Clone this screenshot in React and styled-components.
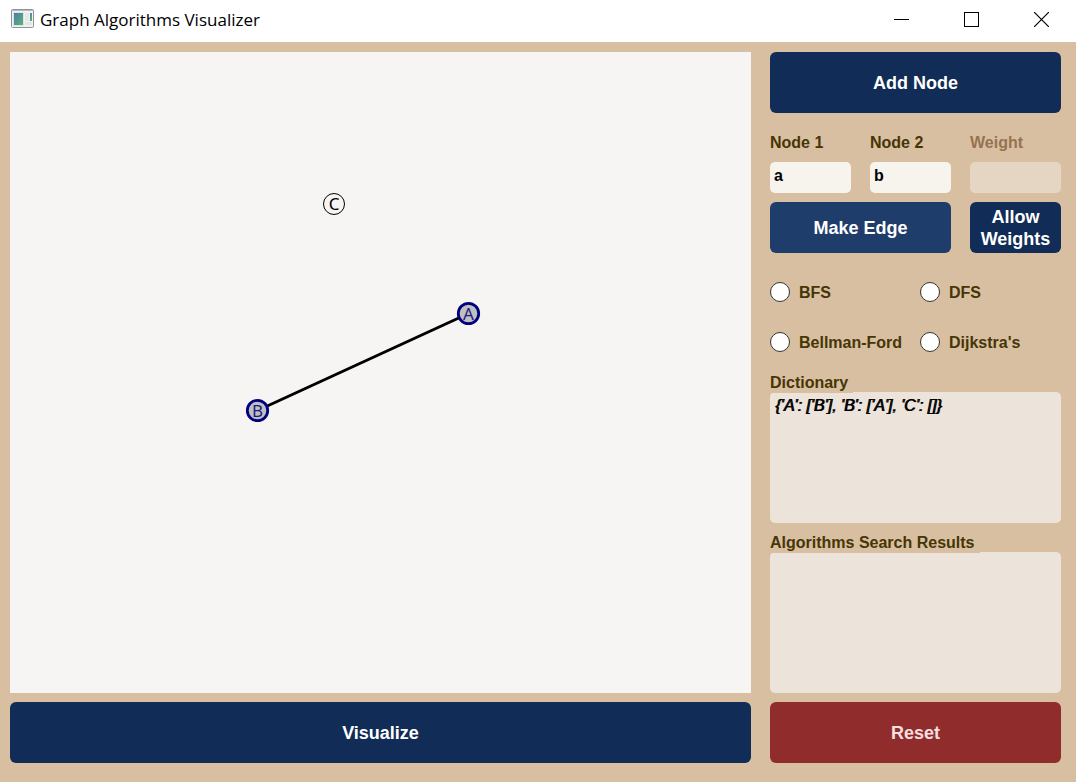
import React from "react";
import styled, { createGlobalStyle } from "styled-components";

const colors = {
  tan: "#d9bfa2",
  navy: "#112c56",
  blue: "#1f3d6b",
  red: "#902c2c",
  paper: "#f6f5f3",
  field: "#f7f4ed",
  panel: "#ece4da",
  ink: "#463605",
};

const GlobalStyle = createGlobalStyle`
  * { box-sizing: border-box; }
  body {
    margin: 0;
    background: ${colors.tan};
    font-family: "Liberation Sans", Arial, sans-serif;
    font-size: 16px;
    font-weight: bold;
    line-height: 20px;
    color: ${colors.ink};
  }
`;

const Window = styled.div`
  display: flex;
  flex-direction: column;
  min-height: 100vh;
`;

const TitleBar = styled.header`
  display: flex;
  align-items: center;
  height: 42px;
  padding-left: 11px;
  background: #fff;
  color: #000;
`;

const AppIcon = styled.svg`
  flex: none;
  margin: 0 6px 5px 0;
`;

const Title = styled.h1`
  flex: 1;
  margin: 0;
  font: 400 17px/40px "Open Sans", "Noto Sans", sans-serif;
  height: 42px;
`;

const WindowButton = styled.button`
  display: flex;
  align-items: center;
  justify-content: center;
  width: 70px;
  height: 42px;
  padding: 0 0 3px;
  border: 0;
  background: none;
`;

const Main = styled.main`
  flex: 1;
  display: grid;
  grid-template-columns: 1fr 291px;
  gap: 19px;
  padding: 10px 15px 19px 10px;
`;

const Column = styled.section`
  display: flex;
  flex-direction: column;
  gap: 9px;
  min-width: 0;
`;

const Canvas = styled.svg`
  flex: 1;
  width: 100%;
  min-height: 400px;
  background: ${colors.paper};
`;

const NodeLabel = styled.text`
  font: 400 17px "Noto Sans", sans-serif;
  text-anchor: middle;
`;

const Button = styled.button`
  height: ${(p) => (p.$compact ? 51 : 61)}px;
  padding: 0;
  border: 0;
  border-radius: 6px;
  background: ${(p) => colors[p.$tone || "navy"]};
  color: ${(p) => (p.$tone === "red" ? "#f5dfdf" : "#fff")};
  font: bold 18px/22px "Liberation Sans", Arial, sans-serif;
`;

const EdgeForm = styled.form`
  display: grid;
  grid-template-columns: 81px 81px 91px;
  gap: 9px 19px;
  margin-top: 11px;
`;

const Field = styled.label`
  display: flex;
  flex-direction: column;
  gap: 9px;
  color: ${(p) => (p.$disabled ? "#957351" : colors.ink)};
`;

const TextInput = styled.input`
  width: 100%;
  height: 31px;
  padding: 0 4px 4px;
  border: 0;
  border-radius: 5px;
  background: ${colors.field};
  color: #000;
  font: inherit;

  &:disabled {
    background: #e5d6c3;
  }
`;

const MakeEdge = styled(Button)`
  grid-column: span 2;
`;

const Algorithms = styled.div`
  display: grid;
  grid-template-columns: 150px 1fr;
  row-gap: 28px;
  margin: 19px 0 10px;
`;

const Option = styled.label`
  display: flex;
  align-items: center;
  gap: 9px;
  height: 22px;
  line-height: 22px;
  white-space: nowrap;
`;

const OptionText = styled.span`
  padding-top: 1px;
`;

const Radio = styled.input`
  appearance: none;
  flex: none;
  width: 20px;
  height: 20px;
  margin: 0;
  border: 1px solid #333;
  border-radius: 50%;
  background: #fff;

  &:checked {
    border-width: 6px;
  }
`;

const Output = styled.div`
  display: flex;
  flex-direction: column;
  align-items: flex-start;
  flex: ${(p) => (p.$grow ? "1" : "none")};
`;

/* The caption's background covers the top pixel row of the box below it. */
const Caption = styled.label`
  z-index: 1;
  height: 21px;
  margin-bottom: -1px;
  padding-right: 5px;
  background: ${colors.tan};
  line-height: 22px;
`;

const OutputBox = styled.textarea`
  display: block;
  flex: 1;
  min-height: 131px;
  width: 100%;
  padding: 4px 5px;
  border: 0;
  border-radius: 5px;
  background: ${colors.panel};
  color: #000;
  font: italic 400 16px/20px "Liberation Sans", Arial, sans-serif;
  text-shadow: 1px 0 #000;
  resize: none;
`;

const nodes = [
  { name: "A", x: 458.5, y: 261.5, visited: true },
  { name: "B", x: 247.5, y: 358.5, visited: true },
  { name: "C", x: 324, y: 152, visited: false },
];

function Graph() {
  return (
    <Canvas role="img" aria-label="Graph with nodes A, B and C">
      <line x1="247.5" y1="358.5" x2="458.5" y2="261.5" stroke="#000" strokeWidth="3" />
      {nodes.map((n) => (
        <g key={n.name}>
          <circle
            cx={n.x}
            cy={n.y}
            r={n.visited ? 10.2 : 10.5}
            fill={n.visited ? "#c0c0c0" : colors.paper}
            stroke={n.visited ? "#000080" : "#000"}
            strokeWidth={n.visited ? 2.8 : 1}
          />
          <NodeLabel x={n.x} y={n.y + 6} fill={n.visited ? "#1c1c80" : "#000"}>
            {n.name}
          </NodeLabel>
        </g>
      ))}
    </Canvas>
  );
}

function Choice({ children }) {
  return (
    <Option>
      <Radio type="radio" name="algorithm" />
      <OptionText>{children}</OptionText>
    </Option>
  );
}

export default function App() {
  return (
    <Window>
      <GlobalStyle />
      <TitleBar>
        <AppIcon width="23" height="19" viewBox="0 0 23 19" aria-hidden="true">
          <defs>
            <linearGradient id="pane" x1="0" y1="0" x2="1" y2="1">
              <stop offset="0" stopColor="#4a7fa8" />
              <stop offset="1" stopColor="#5cb377" />
            </linearGradient>
          </defs>
          <rect x="0.5" y="0.5" width="22" height="18" rx="1" fill="#f0f2f3" stroke="#8b939b" />
          <path d="M1 1.5h21" stroke="#b3bac2" />
          <rect x="2.5" y="3.5" width="10" height="13" fill="#fff" stroke="#dfe2e5" />
          <rect x="3" y="4" width="9" height="12" fill="url(#pane)" />
          <rect x="14" y="4" width="4" height="8" fill="#e6e8ea" />
          <rect x="19" y="4" width="2" height="8" fill="url(#pane)" />
          <rect x="14" y="13" width="7" height="3" fill="#e3e5e7" />
        </AppIcon>
        <Title>Graph Algorithms Visualizer</Title>
        <WindowButton aria-label="Minimize">
          <svg width="15" height="15" viewBox="0 0 15 15">
            <path d="M0 7.5h15" stroke="#000" />
          </svg>
        </WindowButton>
        <WindowButton aria-label="Maximize">
          <svg width="15" height="15" viewBox="0 0 15 15">
            <rect x="0.5" y="0.5" width="14" height="14" fill="none" stroke="#000" />
          </svg>
        </WindowButton>
        <WindowButton aria-label="Close">
          <svg width="15" height="15" viewBox="0 0 15 15">
            <path d="M0 0l15 15M15 0L0 15" stroke="#000" strokeWidth="1.2" />
          </svg>
        </WindowButton>
      </TitleBar>
      <Main>
        <Column>
          <Graph />
          <Button type="button">Visualize</Button>
        </Column>
        <Column>
          <Button type="button">Add Node</Button>
          <EdgeForm onSubmit={(e) => e.preventDefault()}>
            <Field>
              Node 1
              <TextInput defaultValue="a" />
            </Field>
            <Field>
              Node 2
              <TextInput defaultValue="b" />
            </Field>
            <Field $disabled>
              Weight
              <TextInput disabled />
            </Field>
            <MakeEdge $compact $tone="blue">
              Make Edge
            </MakeEdge>
            <Button type="button" $compact>
              Allow Weights
            </Button>
          </EdgeForm>
          <Algorithms role="radiogroup" aria-label="Algorithm">
            <Choice>BFS</Choice>
            <Choice>DFS</Choice>
            <Choice>Bellman-Ford</Choice>
            <Choice>Dijkstra's</Choice>
          </Algorithms>
          <Output>
            <Caption htmlFor="dictionary">Dictionary</Caption>
            <OutputBox id="dictionary" readOnly value="{'A': ['B'], 'B': ['A'], 'C': []}" />
          </Output>
          <Output $grow>
            <Caption htmlFor="results">Algorithms Search Results</Caption>
            <OutputBox id="results" readOnly value="" />
          </Output>
          <Button type="button" $tone="red">
            Reset
          </Button>
        </Column>
      </Main>
    </Window>
  );
}
